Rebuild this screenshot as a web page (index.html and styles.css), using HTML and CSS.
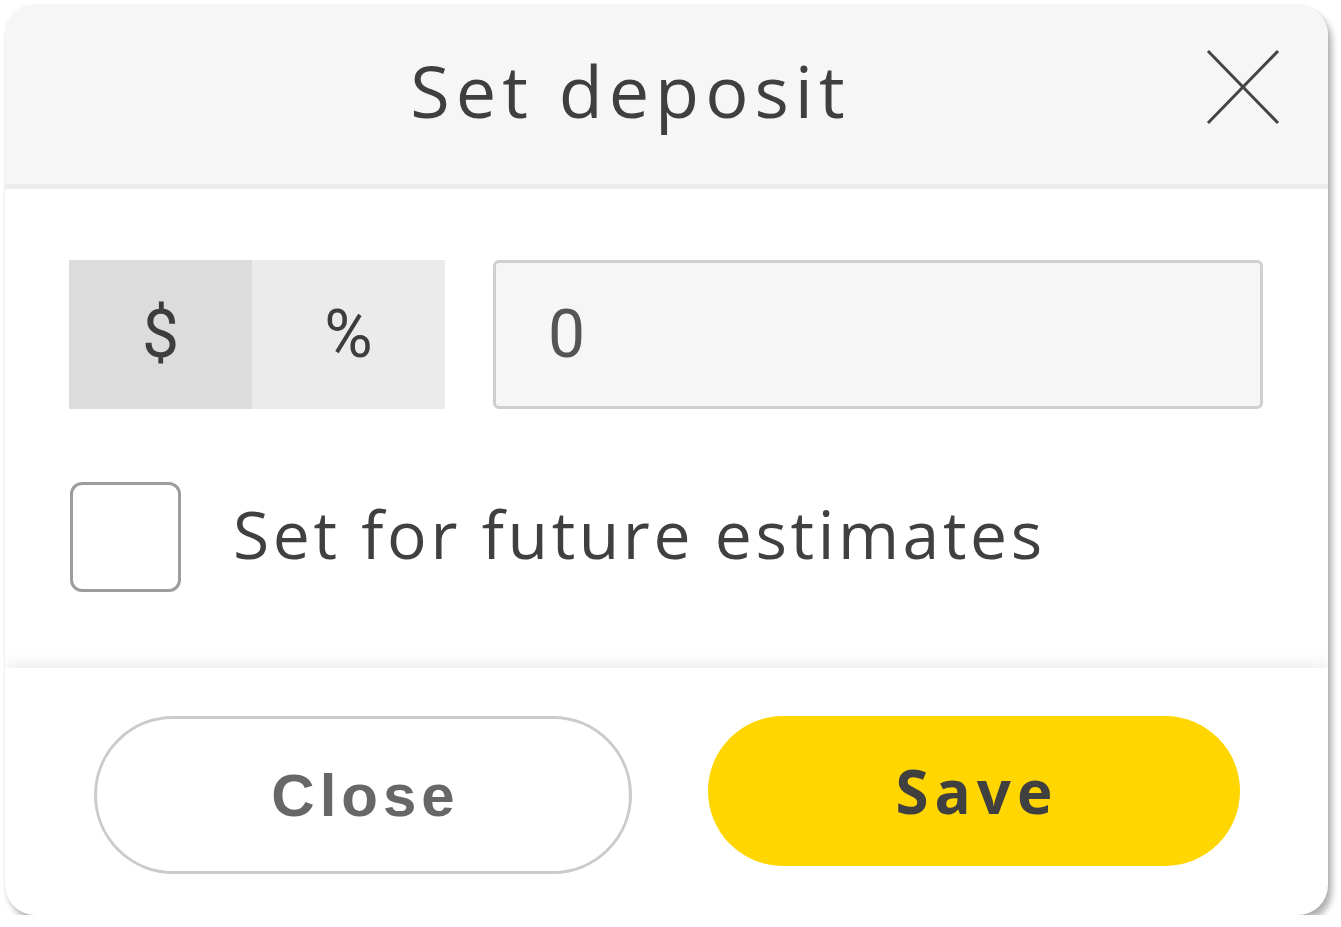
FILE: index.html
```html
<!DOCTYPE html>
<html>
<head>
<meta charset="utf-8">
<link rel="stylesheet" href="styles.css">
</head>
<body>
<div class="modal">
  <div class="header">
    <h1 class="title">Set deposit</h1>
    <svg class="close-x" width="74" height="76" viewBox="0 0 74 76"><path d="M2 2 L72 74 M72 2 L2 74" stroke="#444" stroke-width="3" fill="none"/></svg>
  </div>
  <div class="body">
    <div class="row">
      <div class="seg">
        <div class="seg-item active">$</div>
        <div class="seg-item">%</div>
      </div>
      <div class="input">0</div>
    </div>
    <div class="check-row">
      <div class="checkbox"></div>
      <span class="check-label">Set for future estimates</span>
    </div>
  </div>
  <div class="footer">
    <div class="btn btn-close">Close</div>
    <div class="btn btn-save">Save</div>
  </div>
</div>
</body>
</html>
```

FILE: styles.css
```css
html, body { margin: 0; padding: 0; background: #fff; }
body { font-family: "Open Sans", "Noto Sans", sans-serif; }

.modal {
  margin: 5px 0 0 5px;
  width: 1323px;
  height: 910px;
  border-radius: 30px;
  background: #fff;
  box-shadow: 4px 6px 6px rgba(0,0,0,0.3), 0 0 2px rgba(0,0,0,0.12);
  overflow: hidden;
  display: flex;
  flex-direction: column;
}

.header {
  height: 184px;
  box-sizing: border-box;
  flex: none;
  background: #f6f6f6;
  border-bottom: 5px solid #ececec;
  display: flex;
  align-items: center;
  padding-right: 48px;
}
.title {
  flex: 1;
  text-align: center;
  margin: 0;
  font-weight: 400;
  font-size: 72px;
  color: #3f3f3f;
  letter-spacing: 6px;
  padding-left: 50px;
  padding-bottom: 10px;
}
.close-x { flex: none; margin-bottom: 16px; }

.body {
  flex: 1;
  padding: 71px 64px 0 64px;
  display: flex;
  flex-direction: column;
  gap: 73px;
}
.row { display: flex; gap: 48px; }
.seg { display: flex; height: 149px; }
.seg-item {
  display: flex; align-items: center; justify-content: center;
  font-family: Roboto, sans-serif;
  font-size: 66px;
  color: #3d3d3d;
  background: #ebebeb;
  width: 193px;
}
.seg-item.active { background: #dcdcdc; width: 183px; }
.input {
  flex: none;
  width: 770px;
  box-sizing: border-box;
  height: 149px;
  border: 3px solid #cfcfcf;
  border-radius: 6px;
  background: #f6f6f6;
  font-family: Roboto, sans-serif;
  font-size: 66px;
  color: #555;
  display: flex; align-items: center;
  padding-left: 52px;
}

.check-row { display: flex; align-items: center; gap: 52px; padding-left: 1px; }
.checkbox {
  width: 111px; height: 110px;
  box-sizing: border-box;
  border: 3px solid #9d9d9d;
  border-radius: 12px;
}
.check-label {
  font-size: 66px;
  color: #404040;
  letter-spacing: 3.6px;
  padding-bottom: 8px;
}

.footer {
  height: 247px;
  box-sizing: border-box;
  flex: none;
  box-shadow: 0 -4px 14px rgba(0,0,0,0.08);
  display: flex;
  align-items: flex-start;
  padding: 48px 0 0 89px;
  gap: 76px;
}
.btn {
  display: flex; align-items: center; justify-content: center;
  border-radius: 80px;
  box-sizing: border-box;
}
.btn-close {
  width: 538px; height: 158px;
  border: 3px solid #cbcbcb;
  font-family: "Liberation Sans", Arial, sans-serif;
  font-weight: 700;
  font-size: 60px;
  color: #676767;
  letter-spacing: 5px;
  padding-left: 5px;
}
.btn-save {
  width: 532px; height: 150px;
  background: #ffd600;
  font-weight: 700;
  font-size: 60px;
  color: #404040;
  letter-spacing: 6px;
  padding-left: 6px;
}
```
